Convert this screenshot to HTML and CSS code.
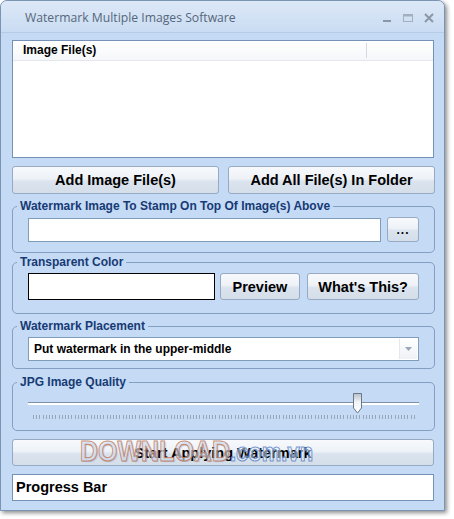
FILE: index.html
```html
<!DOCTYPE html>
<html>
<head>
<meta charset="utf-8">
<link rel="stylesheet" href="styles.css">
</head>
<body>
<div class="window">
  <div class="titlebar">
    <span class="title">Watermark Multiple Images Software</span>
    <div class="controls">
      <svg width="12" height="12" viewBox="0 0 12 12"><rect x="2" y="8" width="8" height="2" fill="#8a97a6"/></svg>
      <svg width="12" height="12" viewBox="0 0 12 12"><rect x="1.5" y="2.5" width="9" height="7" fill="none" stroke="#a3afbd"/><rect x="1.5" y="2.5" width="9" height="2" fill="#a3afbd"/></svg>
      <svg width="12" height="12" viewBox="0 0 12 12"><path d="M2 2 L10 10 M10 2 L2 10" stroke="#8a97a6" stroke-width="2"/></svg>
    </div>
  </div>
  <div class="client">
    <div class="listbox">
      <div class="listhead">
        <div class="col1">Image File(s)</div>
        <div class="col2"></div>
      </div>
    </div>
    <div class="btnrow">
      <button class="btn big">Add Image File(s)</button>
      <button class="btn big">Add All File(s) In Folder</button>
    </div>
    <fieldset class="group g1">
      <legend>Watermark Image To Stamp On Top Of Image(s) Above</legend>
      <div class="row">
        <div class="textbox tb1"></div>
        <button class="btn dots">...</button>
      </div>
    </fieldset>
    <fieldset class="group g2">
      <legend>Transparent Color</legend>
      <div class="row">
        <div class="colorbox"></div>
        <button class="btn mid preview">Preview</button>
        <button class="btn mid whats">What's This?</button>
      </div>
    </fieldset>
    <fieldset class="group g3">
      <legend>Watermark Placement</legend>
      <div class="combo">
        <span class="combotext">Put watermark in the upper-middle</span>
        <span class="comboarrow"><svg width="7" height="4" viewBox="0 0 7 4"><path d="M0 0 L7 0 L3.5 4 Z" fill="#9aa7b8"/></svg></span>
      </div>
    </fieldset>
    <fieldset class="group g4">
      <legend>JPG Image Quality</legend>
      <div class="slider">
        <div class="track"></div>
        <svg class="thumb" width="11" height="21" viewBox="0 0 11 21"><defs><linearGradient id="tg" x1="0" y1="0" x2="0" y2="1"><stop offset="0" stop-color="#b9c0c9"/><stop offset="0.45" stop-color="#f2f4f7"/><stop offset="1" stop-color="#ffffff"/></linearGradient></defs><path d="M1.5 0.5 H9.5 V15 L5.5 20 L1.5 15 Z" fill="url(#tg)" stroke="#6b7889"/></svg>
        <div class="ticks"></div>
      </div>
    </fieldset>
    <button class="btn big start">Start Applying Watermark</button>
    <div class="progress">Progress Bar</div>
  </div>
  <div class="wm"><span class="wm1">DOWNLOAD</span><span class="wm2">.com.vn</span></div>
</div>
</body>
</html>
```
FILE: styles.css
```css
html, body {
  margin: 0;
  padding: 0;
  background: #ffffff;
}
body {
  width: 454px;
  height: 519px;
  overflow: hidden;
  font-family: "Liberation Sans", Arial, sans-serif;
}
.window {
  position: relative;
  width: 445px;
  height: 511px;
  box-sizing: border-box;
  border: 1px solid #7b94b4;
  border-radius: 7px 7px 0 0;
  background: #c4daf5;
  box-shadow: 2px 2px 4px rgba(0,0,0,0.45);
}
.titlebar {
  height: 31px;
  display: flex;
  align-items: center;
  justify-content: space-between;
  border-radius: 6px 6px 0 0;
  background: linear-gradient(#dce8f7, #cadcf3);
  border-bottom: 1px solid #b5cbe6;
}
.title {
  margin-left: 24px;
  margin-top: 1px;
  font-family: "Open Sans", "DejaVu Sans", sans-serif;
  font-size: 12.2px;
  color: #56677a;
}
.controls {
  display: flex;
  gap: 9px;
  margin-right: 9px;
  margin-top: 2px;
}
.client {
  padding: 7px 9px 0 11px;
  display: flex;
  flex-direction: column;
}
.listbox {
  height: 118px;
  box-sizing: border-box;
  border: 1px solid #7591b8;
  background: #ffffff;
  margin-right: 1px;
}
.listhead {
  display: flex;
  height: 19px;
  border-bottom: 1px solid #e4e8ee;
  background: linear-gradient(#ffffff, #f6f7f9);
}
.col1 {
  width: 343px;
  padding-left: 10px;
  font-weight: bold;
  font-size: 12px;
  color: #000;
  border-right: 1px solid #d5dae2;
  margin: 2px 0;
  line-height: 15px;
}
.col2 { flex: 1; }
.btn {
  font-family: "Liberation Sans", Arial, sans-serif;
  font-weight: bold;
  color: #000;
  border: 1px solid #98aac2;
  border-radius: 3px;
  background: linear-gradient(#f7f9fc 0%, #eef2f7 45%, #dae3ee 55%, #d4dee9 100%);
  padding: 0;
  box-sizing: border-box;
}
.btnrow {
  display: flex;
  gap: 9px;
  margin-top: 8px;
}
.btnrow .btn {
  flex: 1;
  height: 28px;
  font-size: 14.5px;
}
.group {
  margin: 0;
  border: 1px solid #859fc4;
  border-radius: 5px;
  min-inline-size: 0;
  padding: 0 15px;
}
.group legend {
  padding: 0 3px;
  margin-left: -11px;
  font-weight: bold;
  font-size: 12px;
  line-height: 14px;
  color: #173a74;
}
.g1 { margin-top: 5px; padding-top: 4px; padding-bottom: 10px; }
.g2 { margin-top: 2px; padding-top: 4px; padding-bottom: 13px; }
.g3 { margin-top: 5px; padding-top: 4px; padding-bottom: 7px; }
.g4 { margin-top: 6px; padding-top: 4px; padding-bottom: 10px; }
.row {
  display: flex;
  align-items: center;
}
.textbox {
  height: 24px;
  box-sizing: border-box;
  border: 1px solid #7f9db9;
  background: #fff;
}
.tb1 { width: 354px; }
.dots {
  width: 32px;
  height: 25px;
  margin-left: 6px;
  font-size: 12px;
  letter-spacing: 1px;
}
.colorbox {
  width: 187px;
  height: 27px;
  box-sizing: border-box;
  border: 1px solid #000;
  background: #fff;
}
.mid {
  height: 27px;
  font-size: 14.5px;
}
.preview { width: 81px; margin-left: 5px; }
.whats { width: 112px; margin-left: 7px; }
.combo {
  height: 24px;
  box-sizing: border-box;
  border: 1px solid #7f9db9;
  background: #fff;
  display: flex;
  align-items: center;
  justify-content: space-between;
}
.combotext {
  padding-left: 5px;
  font-weight: bold;
  font-size: 12px;
  color: #000;
}
.comboarrow {
  width: 17px;
  height: 20px;
  margin-right: 1px;
  display: flex;
  align-items: center;
  justify-content: center;
  border-left: 1px solid #e3e8ef;
  background: linear-gradient(#ffffff, #eef1f5);
}
.slider {
  position: relative;
  display: flow-root;
  height: 27px;
  padding-top: 9px;
  box-sizing: border-box;
}
.track {
  height: 3px;
  border-top: 1px solid #7f8fa6;
  background: #ffffff;
  box-sizing: border-box;
}
.thumb {
  position: absolute;
  left: 324px;
  top: 0;
}
.ticks {
  margin: 10px 4px 0 5px;
  height: 4px;
  background: repeating-linear-gradient(90deg, #9aa6b6 0, #9aa6b6 1px, transparent 1px, transparent 3.2px);
}
.start {
  margin-top: 8px;
  height: 27px;
  font-size: 14.5px;
  margin-right: 1px;
}
.progress {
  margin-top: 8px;
  margin-right: 1px;
  height: 27px;
  box-sizing: border-box;
  border: 1px solid #7591b8;
  background: #fff;
  font-weight: bold;
  font-size: 14.5px;
  line-height: 25px;
  padding-left: 3px;
  color: #000;
}
.wm {
  position: absolute;
  left: 79px;
  top: 432px;
  font-family: "Liberation Sans", Arial, sans-serif;
  font-weight: bold;
  font-size: 25px;
  transform: scaleY(1.2);
  transform-origin: left top;
  pointer-events: none;
  white-space: nowrap;
}
.wm1 {
  color: rgba(235,243,255,0.55);
  -webkit-text-stroke: 1px rgba(195,125,95,0.85);
  text-shadow: 1px 1px 1px rgba(90,120,170,0.35);
}
.wm2 {
  color: rgba(235,243,255,0.5);
  -webkit-text-stroke: 1px rgba(100,135,195,0.85);
  font-size: 22px;
}
```
